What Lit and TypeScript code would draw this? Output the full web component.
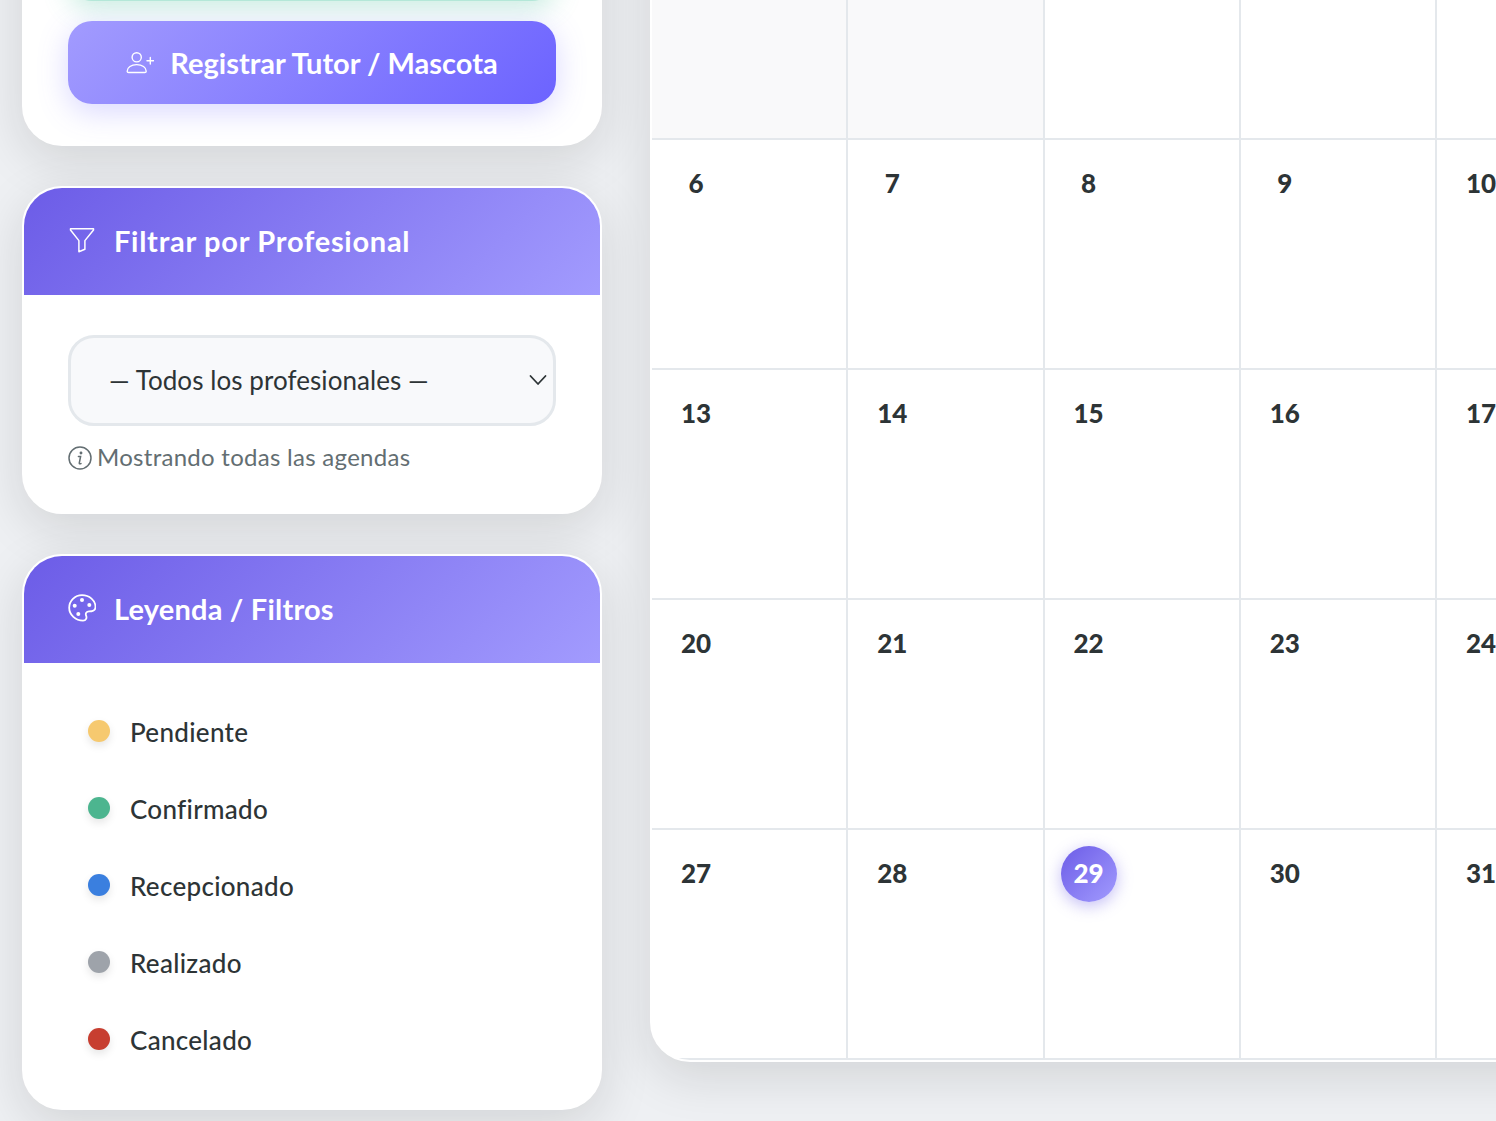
import { LitElement, html, css } from "lit";
import { customElement } from "lit/decorators.js";

type Day = { d?: number; muted?: boolean; today?: boolean };

const row = (...days: number[]): Day[] => [...days.map((d) => ({ d })), {}, {}];

const WEEKS: Day[][] = [
  [{ muted: true }, { muted: true }, {}, {}, {}, {}, {}],
  row(6, 7, 8, 9, 10),
  row(13, 14, 15, 16, 17),
  row(20, 21, 22, 23, 24),
  [{ d: 27 }, { d: 28 }, { d: 29, today: true }, { d: 30 }, { d: 31 }, {}, {}],
];

const LEGEND = [
  { label: "Pendiente", color: "#f6c96f" },
  { label: "Confirmado", color: "#4cb58f" },
  { label: "Recepcionado", color: "#3a7fdf" },
  { label: "Realizado", color: "#9ea3aa" },
  { label: "Cancelado", color: "#c73e30" },
];

@customElement("app-root")
export class AppRoot extends LitElement {
  static styles = css`
    :host {
      display: block;
      width: 100%;
      height: 1121px;
      overflow: hidden;
      background: #eef0f3;
      font-family: "Lato", "Liberation Sans", sans-serif;
      color: #2d3436;
    }
    * { box-sizing: border-box; }
    .layout {
      display: grid;
      grid-template-columns: 580px 1378px;
      column-gap: 48px;
      align-items: start;
      padding-left: 22px;
      margin-top: -124px;
    }
    .sidebar { display: flex; flex-direction: column; gap: 40px; }
    .card {
      background: #fff;
      border: 2px solid #fff;
      border-radius: 40px;
      overflow: hidden;
      box-shadow: 0 14px 50px rgba(20, 25, 20, 0.13);
    }
    .actions {
      display: flex;
      flex-direction: column;
      gap: 20px;
      padding: 40px 44px;
      overflow: visible;
    }
    .mint {
      height: 83px;
      border-radius: 24px;
      background: #b5e8d8;
      box-shadow: 0 8px 26px rgba(85, 200, 160, 0.3);
    }
    .primary {
      display: flex;
      align-items: center;
      justify-content: center;
      gap: 16px;
      height: 83px;
      border-radius: 24px;
      background: linear-gradient(135deg, #a29bfe 0%, #6c63ff 100%);
      box-shadow: 0 8px 30px rgba(108, 99, 255, 0.25);
      color: #fff;
      font-size: 29px;
      font-weight: 700;
    }
    .primary svg { flex: none; }
    .head {
      display: flex;
      align-items: center;
      gap: 18px;
      height: 107px;
      padding: 0 44px;
      background: linear-gradient(135deg, #6c5ce7 0%, #a29bfe 100%);
      color: #fff;
      font-size: 29px;
      font-weight: 700;
    }
    .head span { padding-bottom: 2px; }
    .head.filter { letter-spacing: 0.72px; }
    .head.legend { letter-spacing: 0.2px; }
    .head svg { flex: none; margin-top: -4px; }
    .filter-body { padding: 40px 44px 39px; }
    .select-wrap { position: relative; }
    select {
      display: block;
      width: 100%;
      height: 91px;
      padding: 0 0 2px 38px;
      appearance: none;
      -webkit-appearance: none;
      background: #f8f9fb;
      border: 3px solid #e4e8ec;
      border-radius: 26px;
      color: #2d3436;
      font: 400 26px "Lato", "Liberation Sans", sans-serif;
      letter-spacing: 0.07px;
    }
    .chevron { position: absolute; right: 9px; top: 39px; pointer-events: none; }
    .hint {
      display: flex;
      align-items: center;
      gap: 5px;
      margin-top: 17px;
      height: 30px;
      color: #636e72;
      font-size: 24px;
      letter-spacing: 0.28px;
    }
    .hint span { padding-bottom: 3px; }
    .legend-body { padding: 30px 44px; }
    .item {
      display: flex;
      align-items: center;
      gap: 20px;
      height: 77px;
      padding-left: 20px;
      font-size: 26px;
      font-weight: 500;
      letter-spacing: 0.3px;
    }
    .dot {
      flex: none;
      width: 22px;
      height: 22px;
      margin-top: -2px;
      border-radius: 50%;
      box-shadow: 0 4px 8px rgba(0, 0, 0, 0.1);
    }
    .calendar {
      margin-top: 32px;
      display: grid;
      grid-template-columns: repeat(7, 196.28px);
      grid-auto-rows: 230px;
    }
    .cell {
      padding: 16px;
      background: #fff;
      border-right: 2px solid #e4e8ec;
      border-bottom: 2px solid #e4e8ec;
    }
    .cell.muted { background: #f9f9fa; }
    .num {
      display: flex;
      align-items: center;
      justify-content: center;
      width: 56px;
      height: 56px;
      padding-bottom: 3px;
      border-radius: 50%;
      font-size: 26px;
      font-weight: 900;
      color: #2d3436;
    }
    .today .num {
      background: linear-gradient(135deg, #6c5ce7 0%, #a29bfe 100%);
      box-shadow: 0 4px 16px rgba(108, 92, 231, 0.4);
      color: #fff;
    }
  `;

  render() {
    return html`
      <div class="layout">
        <aside class="sidebar">
          <section class="card actions">
            <div class="mint"></div>
            <div class="primary">
              <svg width="28" height="24" viewBox="126 51 28 24" fill="none" stroke="#fff" stroke-width="1.4" stroke-linecap="round" stroke-linejoin="round">
                <circle cx="136.7" cy="57.3" r="4.6" />
                <path d="M127.2 71.2c0-3.6 4-6.6 9.5-6.6s9.5 3 9.5 6.6c0 .9-.6 1.3-1.4 1.3h-16.2c-.8 0-1.4-.4-1.4-1.3z" />
                <path d="M150.3 57.4v6.6M147 60.7h6.6" />
              </svg>
              <span>Registrar Tutor / Mascota</span>
            </div>
          </section>

          <section class="card">
            <div class="head filter">
              <svg width="28" height="26" viewBox="68 228 28 26" fill="none" stroke="#fff" stroke-width="1.5" stroke-linejoin="round">
                <path d="M70.5 229.8h23v1.2l-8.6 10.6v8.6l-6 2.6v-11.2l-8.4-10.6z" />
              </svg>
              <span>Filtrar por Profesional</span>
            </div>
            <div class="filter-body">
              <div class="select-wrap">
                <select aria-label="Filtrar por profesional">
                  <option>— Todos los profesionales —</option>
                </select>
                <svg class="chevron" width="18" height="12" viewBox="0 0 18 12" fill="none" stroke="#2d3436" stroke-width="1.8" stroke-linecap="round" stroke-linejoin="round">
                  <path d="M1.5 2l7.5 8 7.5-8" />
                </svg>
              </div>
              <div class="hint">
                <svg width="24" height="24" viewBox="0 0 24 24" fill="none" stroke="#636e72" stroke-width="1.5" stroke-linecap="round">
                  <circle cx="12" cy="12" r="11" />
                  <path d="M10.4 10.4h2.2l-1.3 6.6c-.1.7.2 1 1.7.6" />
                  <circle cx="13" cy="7" r="0.7" fill="#636e72" />
                </svg>
                <span>Mostrando todas las agendas</span>
              </div>
            </div>
          </section>

          <section class="card">
            <div class="head legend">
              <svg width="28" height="28" viewBox="68 595 28 28" fill="none" stroke="#fff" stroke-width="1.8" stroke-linejoin="round">
                <path d="M82 596.2c7.4 0 13.5 5.3 13.5 11.8 0 3.2-3.3 4.4-6.4 4.4-2.8 0-3.9 2-3 4.2.9 2.2.2 5.1-3.1 5.1-7.3 0-13.8-5.7-13.8-12.9 0-7 5.700-12.600 12.800-12.600z" />
                <circle cx="82" cy="600.9" r="2" fill="#fff" stroke="none" />
                <circle cx="89.3" cy="606" r="2" fill="#fff" stroke="none" />
                <circle cx="74.7" cy="606.7" r="2" fill="#fff" stroke="none" />
                <circle cx="78.3" cy="615" r="2" fill="#fff" stroke="none" />
              </svg>
              <span>Leyenda / Filtros</span>
            </div>
            <div class="legend-body">
              ${LEGEND.map(
                (l) => html`<div class="item">
                  <span class="dot" style="background:${l.color}"></span>
                  <span>${l.label}</span>
                </div>`
              )}
            </div>
          </section>
        </aside>

        <main class="card calendar">
          ${WEEKS.flat().map(
            (c) => html`<div class="cell ${c.muted ? "muted" : ""} ${c.today ? "today" : ""}">
              ${c.d ? html`<div class="num">${c.d}</div>` : ""}
            </div>`
          )}
        </main>
      </div>
    `;
  }
}
